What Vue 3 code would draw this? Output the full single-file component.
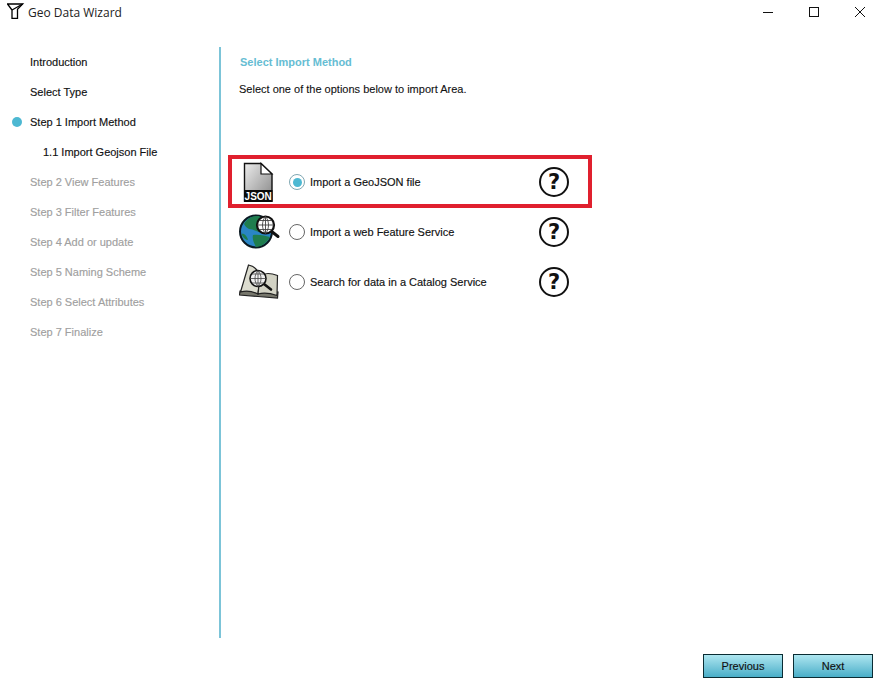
<script setup>
const steps = [
  { label: 'Introduction', state: 'done' },
  { label: 'Select Type', state: 'done' },
  { label: 'Step 1 Import Method', state: 'current' },
  { label: '1.1 Import Geojson File', state: 'sub' },
  { label: 'Step 2 View Features', state: 'todo' },
  { label: 'Step 3 Filter Features', state: 'todo' },
  { label: 'Step 4 Add or update', state: 'todo' },
  { label: 'Step 5 Naming Scheme', state: 'todo' },
  { label: 'Step 6 Select Attributes', state: 'todo' },
  { label: 'Step 7 Finalize', state: 'todo' }
]
const options = [
  { label: 'Import a GeoJSON file', icon: 'json', checked: true },
  { label: 'Import a web Feature Service', icon: 'globe', checked: false },
  { label: 'Search for data in a Catalog Service', icon: 'book', checked: false }
]
</script>

<template>
  <div class="window">
    <header class="titlebar">
      <svg class="logo" width="18" height="20" viewBox="0 0 18 20" fill="none" stroke="#000" stroke-width="1.3">
        <path d="M.5 2H15.7L10.5 7.3V16.3H5V8Z" />
        <path d="M5 8L15.7 2" />
      </svg>
      <span class="title">Geo Data Wizard</span>
      <div class="controls">
        <svg width="12" height="12" viewBox="0 0 12 12" stroke="#111" fill="none"><path d="M1 6.5H11" /></svg>
        <svg width="12" height="12" viewBox="0 0 12 12" stroke="#111" fill="none"><rect x="1.5" y="1.5" width="9" height="9" /></svg>
        <svg width="12" height="12" viewBox="0 0 12 12" stroke="#111" fill="none"><path d="M1 1L11 11M11 1L1 11" /></svg>
      </div>
    </header>

    <div class="body">
      <nav class="sidebar">
        <div v-for="s in steps" :key="s.label" class="step" :class="s.state">
          <span v-if="s.state === 'current'" class="dot"></span>
          {{ s.label }}
        </div>
      </nav>

      <main class="main">
        <h1 class="heading">Select Import Method</h1>
        <p class="intro">Select one of the options below to import Area.</p>

        <div class="options">
          <div v-for="o in options" :key="o.label" class="option">
            <div v-if="o.checked" class="highlight"></div>
            <div class="icon">
              <svg v-if="o.icon === 'json'" width="42" height="42" viewBox="0 0 42 42">
                <defs>
                  <linearGradient id="page" x1="0" y1="0" x2="1" y2="1">
                    <stop offset="0" stop-color="#ececec" />
                    <stop offset="1" stop-color="#858585" />
                  </linearGradient>
                </defs>
                <path d="M5.5 2.5H22L33 13V40H5.5Z" fill="url(#page)" stroke="#111" stroke-width="1.4" />
                <path d="M22 2.5V13H33Z" fill="#fff" stroke="#111" stroke-width="1.2" />
                <rect x="5" y="29" width="28.5" height="12" fill="#0b0b0b" />
                <text x="19.2" y="39" class="json">JSON</text>
              </svg>
              <svg v-else-if="o.icon === 'globe'" width="42" height="36" viewBox="0 0 42 36">
                <circle cx="17" cy="17.5" r="16" fill="#2a86c5" stroke="#0b1a22" stroke-width="2" />
                <path d="M5 10C8 4 14 1.500 20 2C25 6 28 14 26 18C21 20 15 15 10 15C8 14 6 12 5 10Z" fill="#1f7d4e" />
                <path d="M14 21C20 20 26 22 31 23C28 29 22 33 17 33C15 29 13 25 14 21Z" fill="#1f7d4e" />
                <path d="M2.500 20C5 19 8 22 9 26C7 26 4 24 2.500 20Z" fill="#1f7d4e" />
                <path d="M32 17L39 22.500" stroke="#111" stroke-width="3" stroke-linecap="round" />
                <circle cx="26.500" cy="11" r="8.500" fill="#fff" stroke="#111" stroke-width="2.200" />
                <path d="M18 11H35M26.500 2.500V19.500M20 6.500H33M20 15.500H33M26.500 2.500C22.500 7 22.500 15 26.500 19.500M26.500 2.500C30.500 7 30.500 15 26.500 19.500" fill="none" stroke="#444" stroke-width=".9" />
              </svg>
              <svg v-else width="42" height="36" viewBox="0 0 42 36">
                <path d="M1 27L0.500 31L19 32.500L38.500 34L39 28L20 26Z" fill="#77776c" stroke="#222" stroke-width="1.200" />
                <path d="M1.500 28L9.500 1C15 2 19 6 21 12L19 30C13 27 7 26.500 1.500 28Z" fill="#dcdccf" stroke="#222" stroke-width="1.200" />
                <path d="M21 12C25 9 32 9 38.500 11.500L38 31.500C31 29 24 28.500 19 30Z" fill="#d2d2c4" stroke="#222" stroke-width="1.200" />
                <path d="M25 20L32 25.500" stroke="#111" stroke-width="2.600" stroke-linecap="round" />
                <circle cx="19" cy="14.500" r="8" fill="#f0f0f0" stroke="#111" stroke-width="1.600" />
                <path d="M11 14.500H27M19 6.500V22.500M12.800 10H25.200M12.800 19H25.200M19 6.500C15 11 15 18 19 22.500M19 6.500C23 11 23 18 19 22.500" fill="none" stroke="#444" stroke-width=".8" />
              </svg>
            </div>
            <span class="radio" :class="{ checked: o.checked }"></span>
            <span class="label">{{ o.label }}</span>
            <span class="help">?</span>
          </div>
        </div>
      </main>
    </div>

    <footer class="footer">
      <button class="btn">Previous</button>
      <button class="btn">Next</button>
    </footer>
  </div>
</template>

<style scoped>
.window {
  width: 883px;
  height: 687px;
  background: #fff;
  display: flex;
  flex-direction: column;
  overflow: hidden;
  font-family: "Liberation Sans", Arial, sans-serif;
  color: #111;
}
.titlebar {
  height: 24px;
  flex: none;
  display: flex;
  align-items: center;
  padding-left: 7px;
}
.logo { flex: none; margin-right: 3px; }
.title {
  font-family: "Open Sans", sans-serif;
  font-size: 12px;
  color: #222;
}
.controls {
  margin-left: auto;
  margin-right: 17px;
  display: flex;
  gap: 34px;
}
.body {
  margin-top: 23px;
  height: 591px;
  flex: none;
  display: flex;
}
.sidebar {
  width: 219px;
  border-right: 2px solid #7cc4d8;
  flex: none;
}
.step {
  position: relative;
  height: 30px;
  line-height: 30px;
  padding-left: 30px;
  font-size: 11px;
  color: #111;
  -webkit-text-stroke: 0.15px #111;
}
.step.sub { padding-left: 43px; }
.step.todo { color: #a0a0a0; -webkit-text-stroke: 0.15px #a0a0a0; }
.dot {
  position: absolute;
  left: 12px;
  top: 10px;
  width: 10px;
  height: 10px;
  border-radius: 50%;
  background: #4db8d2;
}
.main {
  flex: 1;
  padding-left: 19px;
}
.heading {
  margin: 0;
  height: 30px;
  line-height: 30px;
  font-size: 11px;
  font-weight: 700;
  color: #66bdd3;
}
.intro {
  margin: 0 0 0 -1px;
  height: 24px;
  line-height: 24px;
  font-size: 11px;
  color: #111;
  -webkit-text-stroke: 0.1px #111;
}
.options {
  margin-top: 56px;
  margin-left: -1px;
}
.option {
  position: relative;
  height: 50px;
  width: 330px;
  display: flex;
  align-items: center;
  font-size: 11px;
}
.highlight {
  position: absolute;
  left: -11px;
  top: -2px;
  width: 364px;
  height: 53px;
  border: 4px solid #e0202e;
  box-sizing: border-box;
}
.icon {
  width: 42px;
  height: 42px;
  flex: none;
  display: flex;
  align-items: center;
}
.json {
  font-family: "Liberation Sans", sans-serif;
  font-size: 10px;
  font-weight: 700;
  fill: #fff;
  text-anchor: middle;
}
.radio {
  width: 16px;
  height: 16px;
  margin-left: 8px;
  box-sizing: border-box;
  border: 1px solid #666;
  border-radius: 50%;
  background: #fff;
  flex: none;
  position: relative;
}
.radio.checked { border-color: #7fa7b2; }
.radio.checked::after {
  content: "";
  position: absolute;
  left: 2.5px;
  top: 2.5px;
  width: 9px;
  height: 9px;
  border-radius: 50%;
  background: #4db8d2;
}
.label {
  margin-left: 5px;
  flex: 1;
  -webkit-text-stroke: 0.15px #111;
}
.help {
  width: 30px;
  height: 30px;
  box-sizing: border-box;
  border: 2px solid #111;
  border-radius: 50%;
  flex: none;
  display: flex;
  align-items: center;
  justify-content: center;
  font-family: "DejaVu Sans", sans-serif;
  font-weight: 700;
  font-size: 21px;
  color: #111;
  background: #fff;
}
.footer {
  flex: none;
  display: flex;
  justify-content: flex-end;
  gap: 10px;
  padding: 16px 10px 0 0;
}
.btn {
  width: 80px;
  height: 24px;
  padding: 0;
  border: 1px solid #0a2c33;
  background: linear-gradient(#aee6f0, #49aec8);
  font-family: "Liberation Sans", sans-serif;
  font-size: 11px;
  color: #111;
  -webkit-text-stroke: 0.15px #111;
}
</style>
